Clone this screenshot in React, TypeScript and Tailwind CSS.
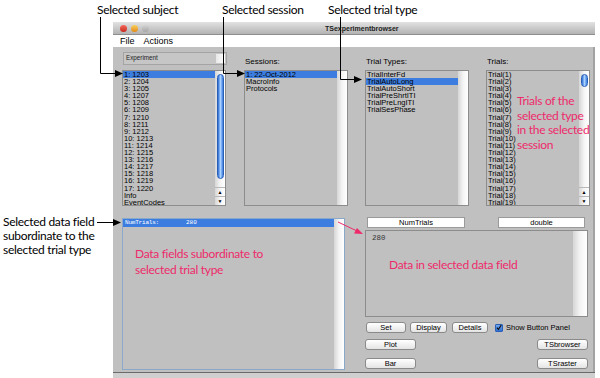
import React from "react";

const subjects = [
  "1: 1203", "2: 1204", "3: 1205", "4: 1207", "5: 1208", "6: 1209", "7: 1210", "8: 1211", "9: 1212",
  "10: 1213", "11: 1214", "12: 1215", "13: 1216", "14: 1217", "15: 1218", "16: 1219", "17: 1220",
  "Info", "EventCodes",
];
const sessions = ["1: 22-Oct-2012", "MacroInfo", "Protocols"];
const trialTypes = ["TrialInterFd", "TrialAutoLong", "TrialAutoShort", "TrialPreShrtITI", "TrialPreLngITI", "TrialSesPhase"];
const trials = Array.from({ length: 19 }, (_, i) => `Trial(${i + 1})`);

function Arrows() {
  return (
    <div className="flex flex-col">
      <div className="h-[9px] flex items-center justify-center border-t border-[#b8b8b8] text-[5px] leading-none text-black">▲</div>
      <div className="h-[9px] flex items-center justify-center border-t border-[#b8b8b8] text-[5px] leading-none text-black">▼</div>
    </div>
  );
}

function ListBox({
  items,
  sel,
  thumb,
}: {
  items: string[];
  sel: number;
  thumb?: "long" | "short";
}) {
  return (
    <div className="flex h-[136px] w-[104px] border border-[#8c8c8c] bg-[#c0c0c0] overflow-hidden">
      <div className="flex-1 flex flex-col overflow-hidden">
        {items.map((t, i) => (
          <div
            key={t}
            className={`h-[7.1px] shrink-0 leading-[7.1px] text-[7.5px] pl-[1px] whitespace-nowrap text-black ${
              i === sel ? "bg-[#3c7ddf]" : ""
            }`}
          >
            {t}
          </div>
        ))}
      </div>
      <div className="w-[10px] flex flex-col bg-gradient-to-r from-[#d6d6d6] via-[#f4f4f4] to-white">
        {thumb === "long" && (
          <>
            <div className="flex-1 pt-[3px] pb-[8px]">
              <div className="mx-auto w-[7px] h-full rounded-full bg-gradient-to-r from-[#2d6bd3] via-[#a9d2ff] to-[#3a7ade] border border-[#2a5fb8]" />
            </div>
            <Arrows />
          </>
        )}
        {thumb === "short" && (
          <>
            <div className="flex-1 pt-[3px]">
              <div className="mx-auto w-[7px] h-[13px] rounded-full bg-gradient-to-r from-[#2d6bd3] via-[#a9d2ff] to-[#3a7ade] border border-[#2a5fb8]" />
            </div>
            <Arrows />
          </>
        )}
      </div>
    </div>
  );
}

function Btn({ label, w }: { label: string; w: string }) {
  return (
    <div
      className={`${w} h-[11px] rounded-[3px] border border-[#8a8a8a] bg-gradient-to-b from-white to-[#e4e4e4] flex items-center justify-center text-[7.5px] leading-none text-black`}
    >
      {label}
    </div>
  );
}

function Field({ label, w }: { label: string; w: string }) {
  return (
    <div className={`${w} h-[11px] border border-[#9a9a9a] bg-white flex items-center justify-center text-[7.5px] leading-none text-black`}>
      {label}
    </div>
  );
}

export default function App() {
  return (
    <div className="relative w-[600px] h-[378px] overflow-hidden bg-white pt-[22px] pl-[113px] font-['Liberation_Sans',Arial,sans-serif]">
      {/* window */}
      <div className="w-[482px] flex flex-col">
        {/* title bar */}
        <div className="h-[13px] flex items-center bg-gradient-to-b from-[#e2e2e2] to-[#b3b3b3] border-b border-[#8e8e8e]">
          <div className="w-[37px] flex items-center gap-[4px] pl-[7px]">
            <div className="w-[7px] h-[7px] rounded-full bg-gradient-to-b from-[#f46a5c] to-[#c8261a]" />
            <div className="w-[7px] h-[7px] rounded-full bg-gradient-to-b from-[#fbd15b] to-[#e08a12]" />
            <div className="w-[7px] h-[7px] rounded-full bg-gradient-to-b from-[#d4d4d4] to-[#a6a6a6]" />
          </div>
          <div className="ml-[175px] text-[7px] font-bold leading-none text-[#222]">TSexperimentbrowser</div>
        </div>
        {/* menu bar */}
        <div className="h-[12px] bg-white flex items-center pl-[7px] gap-[9px] text-[9px] leading-none text-black">
          <span>File</span>
          <span>Actions</span>
        </div>
        {/* body */}
        <div className="h-[325px] bg-[#c0c0c0] border-r-2 border-[#a2a2a2] pl-[9px] pt-[5px] flex flex-col">
          {/* top row */}
          <div className="flex gap-[17px]">
            <div className="flex flex-col">
              <div className="h-[18px]">
                <div className="ml-[1px] w-[104px] h-[13px] border border-[#a4a4a4] bg-[#c6c6c6] flex">
                  <div className="flex-1 text-[6.3px] leading-[7px] pl-[2px] pt-[1px] text-[#222]">Experiment</div>
                  <div className="w-[9px] my-[1px] mr-[1px] bg-gradient-to-r from-[#e8e8e8] to-white" />
                </div>
              </div>
              <ListBox items={subjects} sel={0} thumb="long" />
            </div>
            <div className="flex flex-col">
              <div className="h-[18px] flex items-end pb-[4px] pl-[1px] text-[8px] leading-[8px] text-black">Sessions:</div>
              <ListBox items={sessions} sel={0} />
            </div>
            <div className="flex flex-col">
              <div className="h-[18px] flex items-end pb-[4px] pl-[1px] text-[8px] leading-[8px] text-black">Trial Types:</div>
              <ListBox items={trialTypes} sel={1} />
            </div>
            <div className="flex flex-col">
              <div className="h-[18px] flex items-end pb-[4px] pl-[1px] text-[8px] leading-[8px] text-black">Trials:</div>
              <ListBox items={trials} sel={-1} thumb="short" />
            </div>
          </div>
          {/* bottom row */}
          <div className="mt-[11px] flex gap-[20px]">
            <div className="mt-[1px] w-[223px] h-[152px] flex border border-[#8aa9c9] bg-[#c0c0c0]">
              <div className="flex-1">
                <div className="h-[8px] bg-[#3c7ddf] flex items-center text-[6px] leading-none text-white font-['Liberation_Mono',monospace] pl-[2px] whitespace-pre">
                  <span className="tracking-[-0.2px]">NumTrials:</span>
                  <span className="ml-[27px]">280</span>
                </div>
              </div>
              <div className="w-[10px] bg-gradient-to-r from-[#d6d6d6] via-[#f4f4f4] to-white" />
            </div>
            <div className="w-[223px] flex flex-col">
              <div className="flex justify-between pl-[2px] pr-[3px]">
                <Field label="NumTrials" w="w-[98px]" />
                <Field label="double" w="w-[87px]" />
              </div>
              <div className="mt-[2px] h-[87px] flex border border-[#8c8c8c] bg-[#c0c0c0]">
                <div className="flex-1 pl-[6px] pt-[4px] text-[7.5px] leading-none text-[#333] font-['Liberation_Mono',monospace]">280</div>
                <div className="w-[14px] bg-gradient-to-r from-[#d6d6d6] via-[#f4f4f4] to-white" />
              </div>
              <div className="mt-[5px] flex items-center pl-[1px]">
                <Btn label="Set" w="w-[40px]" />
                <div className="ml-[4px]"><Btn label="Display" w="w-[37px]" /></div>
                <div className="ml-[5px]"><Btn label="Details" w="w-[36px]" /></div>
                <div className="ml-[7px] w-[8px] h-[8px] rounded-[1px] border border-[#2a5fb8] bg-gradient-to-b from-[#6fa8f0] to-[#2e6fd4] flex items-center justify-center">
                  <svg width="7" height="7" viewBox="0 0 7 7">
                    <path d="M1 3.6 L2.8 5.6 L6.2 0.8" stroke="#111" strokeWidth="1.4" fill="none" />
                  </svg>
                </div>
                <span className="ml-[3px] text-[7.5px] leading-none text-black">Show Button Panel</span>
              </div>
              <div className="mt-[6px] flex justify-between">
                <Btn label="Plot" w="w-[51px]" />
                <Btn label="TSbrowser" w="w-[51px]" />
              </div>
              <div className="mt-[8px] flex justify-between">
                <Btn label="Bar" w="w-[51px]" />
                <Btn label="TSraster" w="w-[51px]" />
              </div>
            </div>
          </div>
        </div>
        <div className="h-[6px] bg-[#cfcfcf] border-t border-[#6a6a6a]" />
      </div>

      {/* annotation overlay */}
      <svg className="absolute left-0 top-0 pointer-events-none" width="600" height="378">
        <g stroke="#000" strokeWidth="1" fill="none">
          <path d="M100.5 17 V73.5 H116" />
          <path d="M223.5 17 V73.5 H238" />
          <path d="M340.5 17 V79.5 H355" />
          <path d="M97 222.5 H114" />
        </g>
        <g fill="#000">
          <polygon points="115,70 123,73.5 115,77" />
          <polygon points="237,70 245,73.5 237,77" />
          <polygon points="354,76 362,79.5 354,83" />
          <polygon points="113,219 121,222.5 113,226" />
        </g>
        <path d="M338 222 L357 231" stroke="#ee2a6b" strokeWidth="1" />
        <polygon points="363,234 354,233.5 357,228" fill="#ee2a6b" />
      </svg>
      <div className="absolute left-[97px] top-[3px] whitespace-nowrap text-[12px] tracking-[-0.3px] leading-[14px] text-black font-['Lato',sans-serif]">Selected subject</div>
      <div className="absolute left-[222px] top-[3px] whitespace-nowrap text-[12px] tracking-[-0.3px] leading-[14px] text-black font-['Lato',sans-serif]">Selected session</div>
      <div className="absolute left-[328px] top-[3px] whitespace-nowrap text-[12px] tracking-[-0.3px] leading-[14px] text-black font-['Lato',sans-serif]">Selected trial type</div>
      <div className="absolute left-[3px] top-[215px] whitespace-nowrap text-[12px] tracking-[-0.3px] leading-[14px] text-black font-['Lato',sans-serif]">
        <div>Selected data field</div>
        <div>subordinate to the</div>
        <div>selected trial type</div>
      </div>
      <div className="absolute left-[135px] top-[246px] whitespace-nowrap text-[12px] tracking-[-0.3px] leading-[15.5px] text-[#ee2a6b] font-['Lato',sans-serif]">
        <div>Data fields subordinate to</div>
        <div>selected trial type</div>
      </div>
      <div className="absolute left-[517px] top-[94px] whitespace-nowrap text-[12px] tracking-[-0.3px] leading-[14.5px] text-[#ee2a6b] font-['Lato',sans-serif]">
        <div>Trials of the</div>
        <div>selected type</div>
        <div>in the selected</div>
        <div>session</div>
      </div>
      <div className="absolute left-[389px] top-[258px] whitespace-nowrap text-[12px] tracking-[-0.3px] leading-[14px] text-[#ee2a6b] font-['Lato',sans-serif]">
        Data in selected data field
      </div>
    </div>
  );
}
